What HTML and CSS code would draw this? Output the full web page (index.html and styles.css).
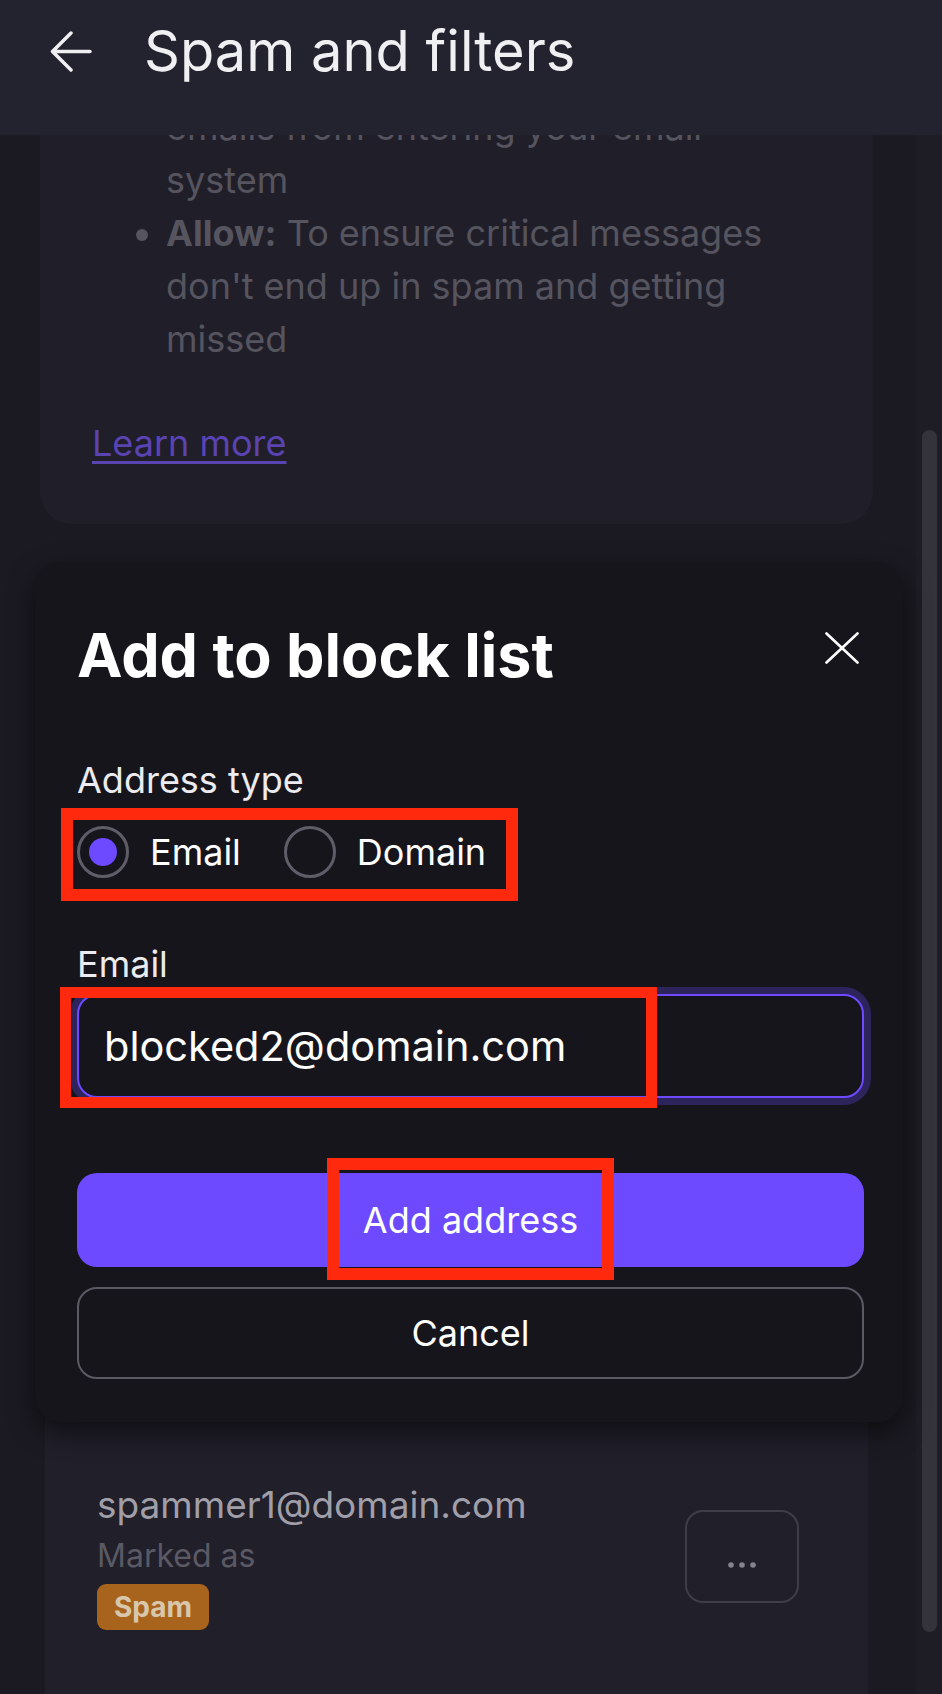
FILE: index.html
```html
<!DOCTYPE html>
<html lang="en">
<head>
<meta charset="utf-8">
<title>Spam and filters</title>
<link rel="stylesheet" href="styles.css">
</head>
<body>
<header class="topbar">
  <svg class="back" width="42" height="41" viewBox="0 0 42 41" aria-hidden="true">
    <path d="M40 20.5H3M21 2L2.5 20.5L21 39" fill="none" stroke="#f0f0f3" stroke-width="3.5" stroke-linecap="round" stroke-linejoin="round"/>
  </svg>
  <h1 class="title">Spam and filters</h1>
</header>

<div class="viewport">
  <main class="page">
    <section class="info-card">
      <ul class="info-list">
        <li class="cont">emails from entering your email<br>system</li>
        <li><b>Allow:</b> To ensure critical messages don't end up in spam and getting missed</li>
      </ul>
      <a class="learn" href="#">Learn more</a>
    </section>

    <section class="list-card">
      <div class="entry">
        <div class="entry-info">
          <div class="entry-addr">spammer1@domain.com</div>
          <div class="entry-meta">Marked as</div>
          <span class="badge">Spam</span>
        </div>
        <button class="more" type="button" aria-label="More">
          <svg width="30" height="8" viewBox="0 0 30 8"><circle cx="4" cy="4" r="2.8" fill="#85848d"/><circle cx="15" cy="4" r="2.8" fill="#85848d"/><circle cx="26" cy="4" r="2.8" fill="#85848d"/></svg>
        </button>
      </div>
    </section>
  </main>
  <div class="scrollbar"><div class="thumb"></div></div>
</div>

<div class="modal" role="dialog">
  <div class="modal-head">
    <h2 class="modal-title">Add to block list</h2>
    <svg class="close" width="34" height="32" viewBox="0 0 34 32" aria-hidden="true">
      <path d="M1.5 1.5L32.5 30.5M32.5 1.5L1.5 30.5" stroke="#ffffff" stroke-width="2.6" stroke-linecap="round"/>
    </svg>
  </div>
  <div class="field-label type-label">Address type</div>
  <div class="radios">
    <span class="radio checked"></span><span class="radio-text">Email</span>
    <span class="radio"></span><span class="radio-text">Domain</span>
  </div>
  <div class="field-label email-label">Email</div>
  <input class="text-input" type="email" value="blocked2@domain.com" readonly>
  <button class="btn primary" type="button">Add address</button>
  <button class="btn secondary" type="button">Cancel</button>

  <div class="mark mark-radios"></div>
  <div class="mark mark-input"></div>
  <div class="mark mark-add"></div>
</div>
</body>
</html>
```

FILE: styles.css
```css
html, body {
  margin: 0;
  padding: 0;
  width: 942px;
  height: 1694px;
  overflow: hidden;
  background: #1b1a22;
  font-family: Inter, "Noto Sans", sans-serif;
}

.topbar {
  height: 135px;
  background: #23222f;
  display: flex;
  align-items: flex-start;
  padding-left: 50px;
  box-sizing: border-box;
}

.back {
  margin-top: 31px;
  flex: none;
}

.title {
  margin: 16px 0 0 52px;
  font-size: 56px;
  line-height: 70px;
  font-weight: 400;
  color: #f0f0f3;
  letter-spacing: 0;
}

.viewport {
  position: relative;
  height: 1559px;
  overflow: hidden;
}

.page {
  margin-top: -74px;
  padding: 0 69px 0 40px;
}

.info-card {
  background: #201f29;
  border-radius: 32px;
  padding: 40px 52px 54px 52px;
  color: #55545f;
  font-size: 36px;
  line-height: 53px;
}

.info-list {
  margin: 0;
  padding-left: 74px;
  width: 655px;
}

.info-list .cont {
  list-style: none;
}

.info-list b {
  font-weight: 700;
}

.learn {
  display: inline-block;
  margin-top: 51px;
  color: #5a43b3;
  text-decoration: underline;
  text-decoration-thickness: 3px;
  text-underline-offset: 5px;
}

.list-card {
  margin: 876px 5px 0 5px;
  background: #201f2a;
  padding: 82px 69px 80px 52px;
}

.entry {
  display: flex;
  align-items: center;
  justify-content: space-between;
}

.entry-addr {
  font-size: 37px;
  line-height: 45px;
  color: #a09fa9;
}

.entry-meta {
  margin-top: 9px;
  font-size: 32px;
  line-height: 40px;
  color: #5a5964;
}

.badge {
  display: inline-block;
  margin-top: 8px;
  height: 46px;
  line-height: 46px;
  padding: 0 17px;
  border-radius: 9px;
  background: #a8631d;
  color: #d9c7ad;
  font-size: 28px;
  font-weight: 700;
}

.more {
  width: 114px;
  height: 93px;
  border: 2px solid #3f3e48;
  border-radius: 18px;
  background: transparent;
  display: flex;
  align-items: center;
  justify-content: center;
  padding: 18px 0 0 0;
}

.scrollbar {
  position: absolute;
  top: 0;
  right: 0;
  bottom: 0;
  width: 26px;
  background: #1e1d25;
}

.thumb {
  position: absolute;
  top: 295px;
  left: 6px;
  width: 15px;
  height: 1202px;
  border-radius: 8px;
  background: #34333c;
}

.modal {
  position: absolute;
  left: 35px;
  top: 562px;
  width: 868px;
  box-sizing: border-box;
  padding: 56px 39px 43px 42px;
  background: #16151c;
  border-radius: 26px;
  box-shadow: 0 10px 26px rgba(0, 0, 0, 0.55);
  display: flex;
  flex-direction: column;
  z-index: 3;
}

.modal-head {
  display: flex;
  justify-content: space-between;
  align-items: flex-start;
}

.modal-title {
  margin: 0;
  font-size: 61px;
  line-height: 74px;
  font-weight: 700;
  color: #ffffff;
  letter-spacing: 0;
}

.close {
  margin-top: 14px;
  margin-right: 5px;
}

.field-label {
  font-size: 36px;
  line-height: 44px;
  color: #ececf0;
}

.type-label {
  margin-top: 66px;
}

.radios {
  margin-top: 24px;
  display: flex;
  align-items: center;
  height: 52px;
}

.radio {
  width: 52px;
  height: 52px;
  box-sizing: border-box;
  border: 3px solid #5f5d68;
  border-radius: 50%;
  display: flex;
  align-items: center;
  justify-content: center;
  flex: none;
}

.radio.checked::after {
  content: "";
  width: 28px;
  height: 28px;
  border-radius: 50%;
  background: #6d4aff;
}

.radio-text {
  margin-left: 21px;
  margin-right: 43px;
  font-size: 36px;
  line-height: 44px;
  color: #ffffff;
}

.email-label {
  margin-top: 64px;
}

.text-input {
  margin-top: 8px;
  height: 104px;
  box-sizing: border-box;
  border: 2px solid #6d4aff;
  border-radius: 20px;
  box-shadow: 0 0 0 7px rgba(109, 74, 255, 0.28);
  background: #16151c;
  color: #ffffff;
  font-family: Inter, "Noto Sans", sans-serif;
  font-size: 41.5px;
  padding: 0 0 0 25px;
  outline: none;
  width: 100%;
}

.btn {
  width: 100%;
  box-sizing: border-box;
  border-radius: 20px;
  font-family: Inter, "Noto Sans", sans-serif;
  font-size: 36px;
  color: #ffffff;
  display: flex;
  align-items: center;
  justify-content: center;
  padding: 0;
}

.primary {
  margin-top: 75px;
  height: 94px;
  border: none;
  background: #6d4aff;
}

.secondary {
  margin-top: 20px;
  height: 92px;
  border: 2px solid #5b5a64;
  background: transparent;
}

.mark {
  position: absolute;
  box-sizing: border-box;
  border: 12px solid #ff2a0d;
  pointer-events: none;
}

.mark-radios {
  left: 26px;
  top: 246px;
  width: 457px;
  height: 93px;
}

.mark-input {
  left: 25px;
  top: 425px;
  width: 597px;
  height: 121px;
  border-width: 11px;
}

.mark-add {
  left: 292px;
  top: 596px;
  width: 287px;
  height: 122px;
}
```
